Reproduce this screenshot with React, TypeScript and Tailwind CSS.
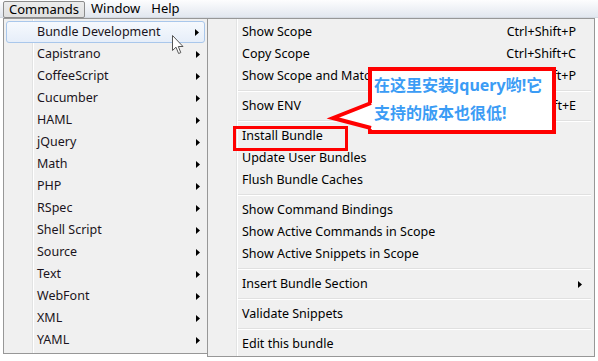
import React from "react";

const leftItems = [
  "Bundle Development",
  "Capistrano",
  "CoffeeScript",
  "Cucumber",
  "HAML",
  "jQuery",
  "Math",
  "PHP",
  "RSpec",
  "Shell Script",
  "Source",
  "Text",
  "WebFont",
  "XML",
  "YAML",
];

type Entry =
  | { type: "item"; label: string; shortcut?: string; sub?: boolean; boxed?: boolean }
  | { type: "sep" };

const rightItems: Entry[] = [
  { type: "item", label: "Show Scope", shortcut: "Ctrl+Shift+P" },
  { type: "item", label: "Copy Scope", shortcut: "Ctrl+Shift+C" },
  { type: "item", label: "Show Scope and Match", shortcut: "Ctrl+Shift+P" },
  { type: "sep" },
  { type: "item", label: "Show ENV", shortcut: "Ctrl+Shift+E" },
  { type: "sep" },
  { type: "item", label: "Install Bundle", boxed: true },
  { type: "item", label: "Update User Bundles" },
  { type: "item", label: "Flush Bundle Caches" },
  { type: "sep" },
  { type: "item", label: "Show Command Bindings" },
  { type: "item", label: "Show Active Commands in Scope" },
  { type: "item", label: "Show Active Snippets in Scope" },
  { type: "sep" },
  { type: "item", label: "Insert Bundle Section", sub: true },
  { type: "sep" },
  { type: "item", label: "Validate Snippets" },
  { type: "sep" },
  { type: "item", label: "Edit this bundle" },
];

function Arrow() {
  return (
    <svg width="4" height="7" viewBox="0 0 4 7" className="shrink-0">
      <polygon points="0,0 4,3.5 0,7" fill="#000" />
    </svg>
  );
}

export default function App() {
  const font = { fontFamily: '"Noto Sans", "Liberation Sans", sans-serif' };
  return (
    <div
      className="relative w-[598px] h-[361px] overflow-hidden bg-white text-[12.5px] text-black"
      style={font}
    >
      {/* Menu bar */}
      <div className="h-[18px] w-full bg-gradient-to-b from-[#fdfdfe] to-[#e2e7ef] border-b border-[#d5dae2] flex items-center pl-[3px] text-[13px]">
        <div className="h-[17px] mt-[1px] px-[5px] flex items-center border border-[#8c8c8c] rounded-[2px] bg-gradient-to-b from-[#ececec] to-[#e0e0e0] leading-none">
          Commands
        </div>
        <div className="ml-[6px] leading-none">Window</div>
        <div className="ml-[11px] leading-none">Help</div>
      </div>

      {/* Left menu */}
      <div className="absolute left-[3px] top-[18px] w-[205px] h-[336px] bg-[#f0f0f0] border border-[#979797] pt-[2px]">
        <div className="absolute left-[28px] top-0 bottom-0 w-[1px] bg-[#e2e3e3]" />
        <div className="absolute left-[29px] top-0 bottom-0 w-[1px] bg-white" />
        {leftItems.map((t, i) => (
          <div
            key={t}
            className={
              "relative h-[22px] mx-[2px] flex items-center pl-[31px] pr-[5px] text-[#1b1420] " +
              (i === 0
                ? "border border-[#a9c7eb] rounded-[3px] bg-gradient-to-b from-[#f6f9fd] to-[#e6eef9]"
                : "")
            }
          >
            <span className={"flex-1 " + (i === 0 ? "-ml-[1px]" : "")}>{t}</span>
            <Arrow />
          </div>
        ))}
      </div>

      {/* Submenu */}
      <div className="absolute left-[207px] top-[18px] w-[388px] h-[339px] bg-[#f0f0f0] border border-[#979797] pt-[2px]">
        <div className="absolute left-[28px] top-0 bottom-0 w-[1px] bg-[#e2e3e3]" />
        <div className="absolute left-[29px] top-0 bottom-0 w-[1px] bg-white" />
        {rightItems.map((e, i) =>
          e.type === "sep" ? (
            <div key={i} className="h-[8px] flex flex-col justify-center pl-[30px] pr-[3px]">
              <div className="h-[1px] bg-[#e0e0e0]" />
              <div className="h-[1px] bg-white" />
            </div>
          ) : (
            <div key={i} className="relative h-[22px] flex items-center pl-[34px] pr-[18px]">
              <span className="flex-1 whitespace-nowrap">{e.label}</span>
              {e.shortcut && <span>{e.shortcut}</span>}
              {e.sub && (
                <span className="mr-[-6px]">
                  <Arrow />
                </span>
              )}
              {e.boxed && (
                <div className="absolute left-[25px] top-[1px] w-[115px] h-[25px] border-[3px] border-[#ff0000]" />
              )}
            </div>
          )
        )}
      </div>

      {/* Callout */}
      <div className="absolute left-[368px] top-[67px] w-[188px] h-[67px] border-4 border-[#ff0000] bg-white pl-[2px]">
        <div
          className="text-[16px] font-bold text-[#3b9cf5] leading-[28px] whitespace-nowrap"
          style={{ fontFamily: '"Noto Sans", "Noto Sans CJK SC", sans-serif' }}
        >
          <div>在这里安装Jquery哟!它</div>
          <div>支持的版本也很低!</div>
        </div>
      </div>
      <svg
        className="absolute left-0 top-0 pointer-events-none"
        width="598"
        height="361"
        viewBox="0 0 598 361"
      >
        <polygon points="333,118 374,102 374,130" fill="#fff" />
        <polyline
          points="371,103 333,118 371,128"
          fill="none"
          stroke="#ff0000"
          strokeWidth="4"
          strokeLinejoin="miter"
        />
      </svg>

      {/* Cursor */}
      <svg
        className="absolute left-[172px] top-[35px]"
        width="13"
        height="20"
        viewBox="0 0 13 20"
      >
        <path
          d="M0.5,0.5 L0.5,15.5 L4,12.2 L6.6,18.5 L8.8,17.6 L6.3,11.5 L11,11.5 Z"
          fill="#fff"
          stroke="#555"
          strokeWidth="1"
          strokeLinejoin="round"
        />
      </svg>
    </div>
  );
}
